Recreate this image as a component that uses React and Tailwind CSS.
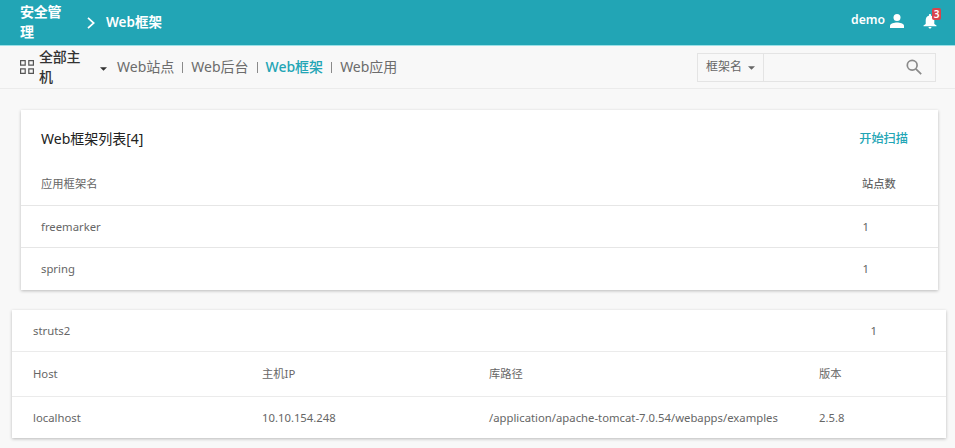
const NavItem = ({ children, active }) => (
  <a className={active ? "font-medium text-[#22a5b5]" : "text-[#6c6c6c]"}>{children}</a>
);

const Divider = () => <span className="mx-[8px] h-[11px] w-px bg-[#8a8a8a]" />;

const Caret = ({ className }) => (
  <svg viewBox="0 0 8 4" className={className} fill="currentColor">
    <path d="M0 0h8L4 4z" />
  </svg>
);

function TopBar() {
  return (
    <header className="flex h-[45px] items-center bg-[#22a5b5] pl-[20px] text-[14px] leading-[20px] font-semibold text-white">
      <span className="-mt-[2px] w-[55px] tracking-[-0.2px]">安全管理</span>
      <svg viewBox="0 0 8 12" className="mr-[11px] ml-[12px] h-[12px] w-[8px]" fill="none" stroke="currentColor" strokeWidth="1.7">
        <path d="M1 .8 6.7 6 1 11.2" />
      </svg>
      <span className="-mt-[2px] text-[13.5px]">Web框架</span>
      <div className="ml-auto flex h-full items-center pr-[18px]">
        <span className="-mt-[5px] w-[34px] text-[12.2px]">demo</span>
        <svg viewBox="0 0 14 14" className="-mt-[4px] ml-[5px] h-[14px] w-[14px]" fill="currentColor">
          <circle cx="7" cy="3.6" r="3.5" />
          <path d="M0 14v-2.2C0 9.4 4.4 8.500 7 8.500s7 .9 7 3.300V14z" />
        </svg>
        <div className="relative mt-[-3px] ml-[19px] h-[15px] w-[14px]">
          <svg viewBox="0 0 14 15" className="h-[15px] w-[14px]" fill="currentColor">
            <path d="M7 0C6.300 0 5.900.5 5.900 1.200v.5C3.800 2.200 2.700 4 2.700 6.200v3.700L.5 11.500v.8h13v-.8L11.300 9.900V6.200c0-2.200-1.100-4-3.200-4.500v-.5C8.100.5 7.700 0 7 0zM5.500 13h3c0 .9-.6 1.500-1.500 1.500S5.500 13.900 5.500 13z" />
          </svg>
          <span className="absolute -top-[6px] left-[9px] flex h-[12px] w-[9px] items-center justify-center rounded-[2px] bg-[#d8434c] text-[10px] leading-none">3</span>
        </div>
      </div>
    </header>
  );
}

function SubBar() {
  return (
    <div className="flex h-[44px] items-center border-t border-b border-t-[#9be0e7] border-b-[#ebebeb] pl-[20px] text-[14px] leading-[20px]">
      <svg viewBox="0 0 14 14" className="h-[14px] w-[14px] text-[#555]" fill="none" stroke="currentColor" strokeWidth="1.200">
        <path d="M.6.6h4.600v4.600H.6zM8.800.6h4.600v4.600H8.800zM.6 8.800h4.600v4.600H.6zM8.800 8.800h4.600v4.600H8.800z" />
      </svg>
      <span className="ml-[5px] w-[55px] tracking-[-0.200px] font-medium text-[#333]">全部主机</span>
      <Caret className="mt-[3px] mr-[10px] ml-[6px] h-[4px] w-[7px] text-[#333]" />
      <NavItem>Web站点</NavItem>
      <Divider />
      <NavItem>Web后台</NavItem>
      <Divider />
      <NavItem active>Web框架</NavItem>
      <Divider />
      <NavItem>Web应用</NavItem>
      <div className="mr-[19px] ml-auto flex h-[29px] w-[239px] border border-[#e4e4e4] text-[12px] text-[#666]">
        <div className="flex w-[66px] items-center border-r border-[#e4e4e4] pl-[8px]">
          <span>框架名</span>
          <Caret className="mt-[2px] ml-[6px] h-[4px] w-[7px]" />
        </div>
        <div className="flex flex-1 items-center justify-end pr-[13px]">
          <svg viewBox="0 0 16 16" className="h-[16px] w-[16px] text-[#8a8a8a]" fill="none" stroke="currentColor" strokeWidth="1.700">
            <circle cx="6.200" cy="6.200" r="4.900" />
            <path d="m9.800 9.800 5.400 5.400" />
          </svg>
        </div>
      </div>
    </div>
  );
}

const SiteRow = ({ name, count, className }) => (
  <div className={`flex items-center border-t border-[#e6e6e6] ${className}`}>
    <span className="flex-1">{name}</span>
    <span>{count}</span>
  </div>
);

const hostGrid = "grid grid-cols-[229px_227px_330px_1fr] items-center border-t border-[#ebebeb] pl-[21px]";

export default function App() {
  return (
    <div className="h-[448px] w-[955px] overflow-hidden bg-[#f8f8f8] font-['Noto_Sans','Noto_Sans_CJK_SC',sans-serif] text-[11.300px] leading-[16px] text-[#666]">
      <TopBar />
      <SubBar />
      <section className="mt-[21px] ml-[21px] h-[180px] w-[917px] bg-white shadow-[0_1px_3px_rgba(0,0,0,0.25)]">
        <div className="flex h-[53px] items-center justify-between pt-[5px] pr-[30px] pl-[20px]">
          <h1 className="text-[14px] text-[#222]">Web框架列表[4]</h1>
          <a className="text-[12.200px] font-medium text-[#22a5b5]">开始扫描</a>
        </div>
        <div className="flex h-[42px] items-center pl-[20px]">
          <span className="w-[821px]">应用框架名</span>
          <span className="font-medium">站点数</span>
        </div>
        <SiteRow name="freemarker" count="1" className="h-[42px] pr-[69px] pl-[20px]" />
        <SiteRow name="spring" count="1" className="h-[43px] pr-[69px] pl-[20px]" />
      </section>
      <section className="mt-[20px] ml-[12px] h-[128px] w-[934px] bg-white shadow-[0_1px_3px_rgba(0,0,0,0.25)]">
        <div className="flex h-[41px] items-center justify-between pr-[69px] pl-[21px]">
          <span>struts2</span>
          <span>1</span>
        </div>
        <div className={`${hostGrid} h-[45px]`}>
          <span>Host</span>
          <span>主机IP</span>
          <span>库路径</span>
          <span>版本</span>
        </div>
        <div className={`${hostGrid} h-[42px]`}>
          <span>localhost</span>
          <span>10.10.154.248</span>
          <span>/application/apache-tomcat-7.0.54/webapps/examples</span>
          <span>2.5.8</span>
        </div>
      </section>
    </div>
  );
}
